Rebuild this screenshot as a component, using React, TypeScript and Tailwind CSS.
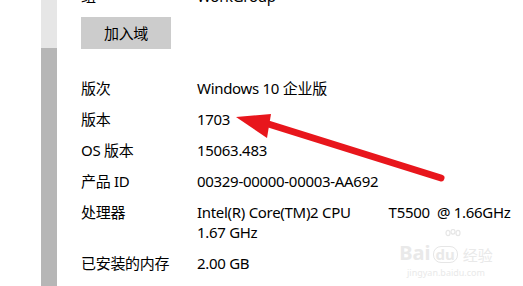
const rows = [
  { label: '版次', value: ['Windows 10 企业版'] },
  { label: '版本', value: ['1703'] },
  { label: 'OS 版本', value: ['15063.483'] },
  { label: '产品 ID', value: ['00329-00000-00003-AA692'] },
  { label: '处理器', value: ['cpu', '1.67 GHz'] },
  { label: '已安装的内存', value: ['2.00 GB'] },
]

function Arrow() {
  return (
    <svg className="absolute left-0 top-0 pointer-events-none" width="523" height="286" viewBox="0 0 523 286">
      <line x1="262" y1="122" x2="441" y2="178" stroke="#e8161c" strokeWidth="7" strokeLinecap="round" />
      <polygon points="236,117 271,114 267,138" fill="#e8161c" />
    </svg>
  )
}

// faint baidu jingyan watermark
function Watermark() {
  return (
    <div className="absolute left-[400px] top-[229px] w-[92px] flex flex-col items-center text-[#e9e9e9] leading-none whitespace-nowrap tracking-normal">
      <svg width="18" height="14" viewBox="0 0 18 14" className="ml-[14px]" fill="none" stroke="#e6e6e6" strokeWidth="1.2">
        <ellipse cx="4" cy="4" rx="2" ry="2.6" />
        <ellipse cx="9" cy="2.8" rx="2" ry="2.4" />
        <ellipse cx="14" cy="4" rx="2" ry="2.6" />
      </svg>
      <div className="flex items-end gap-[2px]">
        <span className="text-[20px] font-bold">Bai</span>
        <span className="text-[15px] font-bold border border-[#e6e6e6] rounded-[8px] px-[2px]">du</span>
        <span className="text-[15px] ml-[3px]">经验</span>
      </div>
      <div className="text-[9px] mt-[5px]">jingyan.baidu.com</div>
    </div>
  )
}

export default function App() {
  return (
    <div
      className="relative w-[523px] h-[286px] overflow-hidden bg-white text-black text-[15px] leading-[20px] tracking-[-0.3px]"
      style={{ fontFamily: '"Noto Sans", "Noto Sans CJK SC", sans-serif' }}
    >
      <div className="flex h-full">
        <div className="w-[41px] shrink-0" />
        <div className="w-[16px] shrink-0 flex flex-col">
          <div className="h-[48px] bg-[#e6e6e6]" />
          <div className="flex-1 bg-[#b6b6b6]" />
        </div>
        <div className="pl-[24px] flex flex-col -mt-[14px]">
          <div className="flex">
            <div className="w-[116px]">组</div>
            <div>WorkGroup</div>
          </div>
          <div className="mt-[11px] w-[90px] h-[32px] bg-[#cccccc] flex items-center justify-center">
            加入域
          </div>
          <div className="mt-[29px] flex flex-col gap-[11px]">
            {rows.map((row) => (
              <div key={row.label} className="flex">
                <div className="w-[116px] shrink-0">{row.label}</div>
                <div className="whitespace-nowrap">
                  {row.value.map((v) =>
                    v === 'cpu' ? (
                      <div key={v} className="flex">
                        <span>Intel(R) Core(TM)2 CPU</span>
                        <span className="ml-[38px] whitespace-pre">T5500  @ 1.66GHz</span>
                      </div>
                    ) : (
                      <div key={v}>{v}</div>
                    )
                  )}
                </div>
              </div>
            ))}
          </div>
        </div>
      </div>
      <Watermark />
      <Arrow />
    </div>
  )
}
